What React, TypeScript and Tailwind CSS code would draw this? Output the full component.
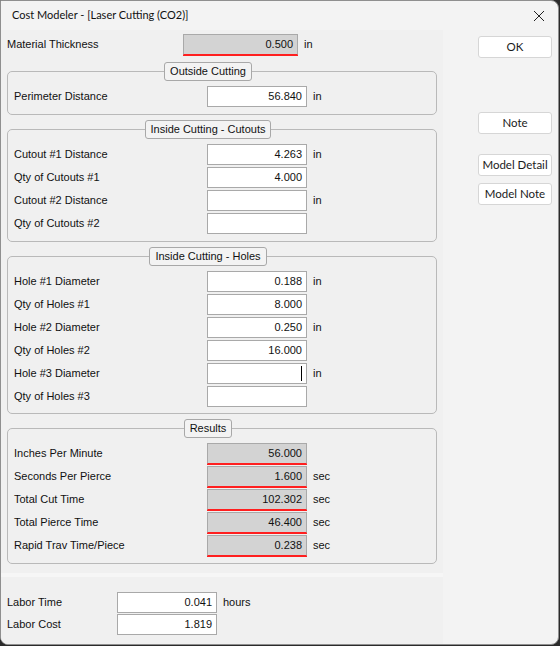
import { ReactNode } from 'react'

type Field = {
  label: string
  value?: string
  unit?: string
  caret?: boolean
}

const cutouts: Field[] = [
  { label: 'Cutout #1 Distance', value: '4.263', unit: 'in' },
  { label: 'Qty of Cutouts #1', value: '4.000' },
  { label: 'Cutout #2 Distance', unit: 'in' },
  { label: 'Qty of Cutouts #2' },
]

const holes: Field[] = [
  { label: 'Hole #1 Diameter', value: '0.188', unit: 'in' },
  { label: 'Qty of Holes #1', value: '8.000' },
  { label: 'Hole #2 Diameter', value: '0.250', unit: 'in' },
  { label: 'Qty of Holes #2', value: '16.000' },
  { label: 'Hole #3 Diameter', unit: 'in', caret: true },
  { label: 'Qty of Holes #3' },
]

const results: Field[] = [
  { label: 'Inches Per Minute', value: '56.000' },
  { label: 'Seconds Per Pierce', value: '1.600', unit: 'sec' },
  { label: 'Total Cut Time', value: '102.302', unit: 'sec' },
  { label: 'Total Pierce Time', value: '46.400', unit: 'sec' },
  { label: 'Rapid Trav Time/Piece', value: '0.238', unit: 'sec' },
]

function TextBox({
  value,
  readOnly,
  caret,
  width = 'w-[100px]',
}: {
  value?: string
  readOnly?: boolean
  caret?: boolean
  width?: string
}) {
  return (
    <div
      className={`${width} flex h-[21px] shrink-0 items-center justify-end border px-[4px] text-[11px] ${
        readOnly
          ? 'border-[#a9a9a9] border-b-[#ff1f1f] bg-[#d3d3d3] shadow-[0_1px_0_#ff1f1f]'
          : 'border-[#a9a9a9] bg-white'
      }`}
    >
      {value}
      {caret && <span className="h-[15px] w-px bg-black" />}
    </div>
  )
}

function FieldRow({ field, readOnly }: { field: Field; readOnly?: boolean }) {
  return (
    <div className="flex items-center">
      <span className="w-[193px] shrink-0">{field.label}</span>
      <TextBox value={field.value} readOnly={readOnly} caret={field.caret} />
      {field.unit && <span className="ml-[6px]">{field.unit}</span>}
    </div>
  )
}

function GroupBox({
  title,
  tight,
  children,
}: {
  title: string
  tight?: boolean
  children: ReactNode
}) {
  return (
    <div
      className={`relative mx-[6px] w-[430px] rounded-[5px] border border-[#b9b9b9] pt-[14px] pl-[6px] ${
        tight ? 'pb-[6px]' : 'pb-[7px]'
      }`}
    >
      <div className="absolute -top-[10px] left-0 flex w-[400px] justify-center">
        <span className="flex h-[19px] items-center rounded-[3px] border border-[#a8a8a8] bg-[#f3f3f3] px-[5px] text-[11px]">
          {title}
        </span>
      </div>
      <div className="flex flex-col gap-[2px]">{children}</div>
    </div>
  )
}

function DialogButton({ children, className = '' }: { children: ReactNode; className?: string }) {
  return (
    <button
      className={`flex h-[22px] w-[74px] items-center justify-center rounded-[3px] border border-[#d6d6d6] bg-white text-[11.5px] text-[#1a1a1a] ${className}`}
    >
      {children}
    </button>
  )
}

export default function App() {
  return (
    <div className="h-[646px] w-[560px] bg-[#2b2b2b]">
      <div className="flex h-[645px] w-[559px] flex-col overflow-hidden rounded-tr-[8px] rounded-b-[8px] border border-[#8f8f8f] bg-[#f3f3f3] text-[#111] [font-family:'Liberation_Sans',Arial,sans-serif]">
        {/* title bar */}
        <div className="flex h-[29px] shrink-0 items-center justify-between pr-[13px] pl-[11px] text-[11px] [font-family:Lato,sans-serif]">
          <span>Cost Modeler - [Laser Cutting (CO2)]</span>
          <svg width="12" height="12" viewBox="0 0 12 12" className="text-[#222]">
            <path d="M1 1 L11 11 M11 1 L1 11" stroke="currentColor" strokeWidth="1" />
          </svg>
        </div>

        <div className="flex flex-1">
          {/* form column */}
          <div className="flex w-[442px] shrink-0 flex-col text-[11px]">
            <div className="flex h-[543px] flex-col bg-[#f0f0f0] pt-[4px]">
              <div className="flex items-center pl-[6px]">
                <span className="w-[176px] shrink-0">Material Thickness</span>
                <TextBox value="0.500" readOnly width="w-[115px]" />
                <span className="ml-[6px]">in</span>
              </div>

              <div className="mt-[16px] flex flex-col gap-[14px]">
                <GroupBox title="Outside Cutting">
                  <FieldRow field={{ label: 'Perimeter Distance', value: '56.840', unit: 'in' }} />
                </GroupBox>
                <GroupBox title="Inside Cutting - Cutouts">
                  {cutouts.map((f) => (
                    <FieldRow key={f.label} field={f} />
                  ))}
                </GroupBox>
                <GroupBox title="Inside Cutting - Holes" tight>
                  {holes.map((f) => (
                    <FieldRow key={f.label} field={f} />
                  ))}
                </GroupBox>
                <GroupBox title="Results">
                  {results.map((f) => (
                    <FieldRow key={f.label} field={f} readOnly />
                  ))}
                </GroupBox>
              </div>
            </div>

            <div className="h-[4px] bg-[#f6f6f6]" />

            <div className="flex flex-1 flex-col gap-[1px] bg-[#f0f0f0] pt-[15px] pl-[6px]">
              <div className="flex items-center">
                <span className="w-[110px] shrink-0">Labor Time</span>
                <TextBox value="0.041" />
                <span className="ml-[6px]">hours</span>
              </div>
              <div className="flex items-center">
                <span className="w-[110px] shrink-0">Labor Cost</span>
                <TextBox value="1.819" />
              </div>
            </div>
          </div>

          {/* action buttons */}
          <div className="flex flex-1 flex-col pt-[6px] pl-[35px] [font-family:Lato,sans-serif]">
            <DialogButton>OK</DialogButton>
            <DialogButton className="mt-[54px]">Note</DialogButton>
            <DialogButton className="mt-[20px]">Model Detail</DialogButton>
            <DialogButton className="mt-[7px]">Model Note</DialogButton>
          </div>
        </div>
      </div>
    </div>
  )
}
